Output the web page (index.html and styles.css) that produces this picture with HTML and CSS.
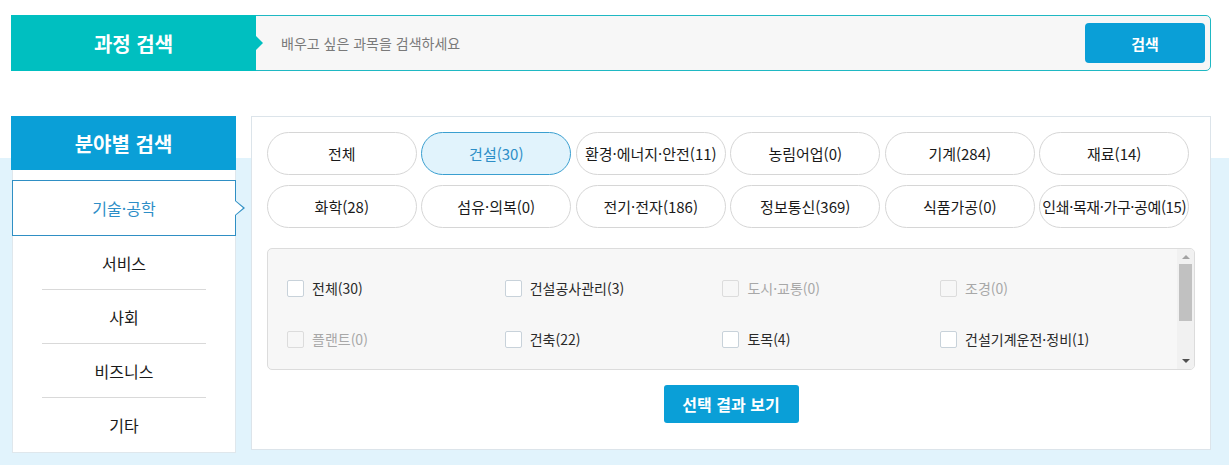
FILE: index.html
```html
<!DOCTYPE html>
<html lang="ko">
<head>
<meta charset="utf-8">
<title>과정 검색</title>
<link rel="stylesheet" href="styles.css">
</head>
<body>
<div class="search">
  <div class="search-label">과정 검색</div>
  <div class="search-input">배우고 싶은 과목을 검색하세요</div>
  <button class="search-btn">검색</button>
</div>

<div class="field-section">
  <aside class="sidebar">
    <div class="sidebar-head">분야별 검색</div>
    <ul class="side-list">
      <li class="side-item active">기술·공학</li>
      <li class="side-item">서비스</li>
      <li class="side-item">사회</li>
      <li class="side-item">비즈니스</li>
      <li class="side-item last">기타</li>
    </ul>
  </aside>

  <section class="panel">
    <div class="pills">
      <div class="pill">전체</div>
      <div class="pill selected">건설(30)</div>
      <div class="pill">환경·에너지·안전(11)</div>
      <div class="pill">농림어업(0)</div>
      <div class="pill">기계(284)</div>
      <div class="pill">재료(14)</div>
      <div class="pill">화학(28)</div>
      <div class="pill">섬유·의복(0)</div>
      <div class="pill">전기·전자(186)</div>
      <div class="pill">정보통신(369)</div>
      <div class="pill">식품가공(0)</div>
      <div class="pill tight">인쇄·목재·가구·공예(15)</div>
    </div>

    <div class="checks-box">
      <div class="checks">
        <label class="check"><span class="box"></span>전체(30)</label>
        <label class="check"><span class="box"></span>건설공사관리(3)</label>
        <label class="check disabled"><span class="box"></span>도시·교통(0)</label>
        <label class="check disabled"><span class="box"></span>조경(0)</label>
        <label class="check disabled"><span class="box"></span>플랜트(0)</label>
        <label class="check"><span class="box"></span>건축(22)</label>
        <label class="check"><span class="box"></span>토목(4)</label>
        <label class="check"><span class="box"></span>건설기계운전·정비(1)</label>
      </div>
      <div class="scrollbar">
        <span class="arrow up"></span>
        <span class="thumb"></span>
        <span class="track-rest"></span>
        <span class="arrow down"></span>
      </div>
    </div>

    <div class="actions">
      <button class="result-btn">선택 결과 보기</button>
    </div>
  </section>
</div>
</body>
</html>
```

FILE: styles.css
```css
* { box-sizing: border-box; }

html, body {
  margin: 0;
  padding: 0;
  background: #fff;
  font-family: "Noto Sans CJK KR", "Noto Sans", sans-serif;
  color: #222;
}

ul { margin: 0; padding: 0; list-style: none; }
button { font-family: inherit; border: 0; cursor: pointer; }

/* ---------- search bar ---------- */
.search {
  display: flex;
  align-items: stretch;
  width: 1200px;
  height: 56px;
  margin: 15px 0 0 11px;
  border: 1px solid #1fb8c3;
  border-radius: 0 5px 5px 0;
  background: #f7f7f7;
}

.search-label {
  position: relative;
  width: 245px;
  background: #00bfc0;
  color: #fff;
  font-size: 20px;
  font-weight: 700;
  display: flex;
  align-items: center;
  justify-content: center;
  margin: -1px 0 -1px -1px;
}

.search-label::after {
  content: "";
  position: absolute;
  right: -7px;
  top: 50%;
  margin-top: -7px;
  border-left: 7px solid #00bfc0;
  border-top: 7px solid transparent;
  border-bottom: 7px solid transparent;
}

.search-input {
  flex: 1;
  display: flex;
  align-items: center;
  padding-left: 25px;
  font-size: 14px;
  color: #7a7a7a;
}

.search-btn {
  align-self: center;
  width: 120px;
  height: 40px;
  margin-right: 5px;
  background: #0a9fd7;
  color: #fff;
  font-size: 15px;
  font-weight: 700;
  border-radius: 4px;
}

/* ---------- field section ---------- */
.field-section {
  display: flex;
  align-items: flex-start;
  gap: 15px;
  margin-top: 45px;
  padding: 0 18px 0 11px;
  height: 349px;
  background: linear-gradient(#fff 0, #fff 42px, #e1f3fc 42px);
}

.sidebar {
  width: 225px;
}

.sidebar-head {
  height: 54px;
  background: #0a9fd7;
  color: #fff;
  font-size: 20px;
  font-weight: 700;
  display: flex;
  align-items: center;
  justify-content: center;
}

.side-list {
  margin-left: 1px;
  background: #fff;
  border: 1px solid #dfe7ec;
  border-top: 0;
  padding-top: 10px;
}

.side-item {
  position: relative;
  height: 54px;
  margin: 0 29px;
  border-bottom: 1px solid #d9d9d9;
  display: flex;
  align-items: center;
  justify-content: center;
  font-size: 16px;
  color: #1a1a1a;
}

.side-item.last { border-bottom: 0; }

.side-item.active {
  margin: 0 -1px 0 -1px;
  height: 56px;
  border: 1px solid #2f8fc4;
  color: #2d8ec7;
}

.side-item.active::before,
.side-item.active::after {
  content: "";
  position: absolute;
  top: 50%;
}

.side-item.active::before {
  right: -10px;
  margin-top: -8px;
  border-left: 10px solid #2f8fc4;
  border-top: 8px solid transparent;
  border-bottom: 8px solid transparent;
}

.side-item.active::after {
  right: -8px;
  margin-top: -7px;
  border-left: 8px solid #fff;
  border-top: 7px solid transparent;
  border-bottom: 7px solid transparent;
}

/* ---------- right panel ---------- */
.panel {
  width: 960px;
  height: 334px;
  background: #fff;
  border: 1px solid #dce4ea;
  padding: 15px 15px 0 15px;
}

.pills {
  display: grid;
  grid-template-columns: repeat(6, 149.6px);
  column-gap: 4.9px;
  row-gap: 10px;
}

.pill {
  height: 43px;
  border: 1px solid #d6d6d6;
  border-radius: 22px;
  background: #fff;
  display: flex;
  align-items: center;
  justify-content: center;
  font-size: 15px;
  color: #1a1a1a;
  white-space: nowrap;
}

.pill.tight { letter-spacing: -0.4px; }

.pill.selected {
  background: #e1f3fc;
  border-color: #3a9fd0;
  color: #2d8ec7;
}

.checks-box {
  display: flex;
  margin-top: 20px;
  width: 928px;
  height: 122px;
  background: #f7f7f7;
  border: 1px solid #dcdcdc;
  border-radius: 5px;
  overflow: hidden;
}

.checks {
  flex: 1;
  display: grid;
  grid-template-columns: repeat(4, 217.7px);
  row-gap: 33px;
  align-content: start;
  padding: 30px 0 0 19px;
}

.check {
  display: flex;
  align-items: center;
  gap: 8px;
  height: 18px;
  font-size: 14px;
  color: #2a2a2a;
}

.check .box {
  width: 17px;
  height: 17px;
  background: #fff;
  border: 1px solid #c8d2da;
  border-radius: 2px;
  flex: none;
}

.check.disabled { color: #a8a8a8; }
.check.disabled .box {
  background: #f7f7f7;
  border-color: #dcdcdc;
}

.scrollbar {
  width: 17px;
  background: #f1f1f1;
  display: flex;
  flex-direction: column;
  align-items: center;
}

.arrow {
  width: 0;
  height: 0;
  border-left: 4px solid transparent;
  border-right: 4px solid transparent;
}

.arrow.up {
  margin: 6px 0 5px;
  border-bottom: 4px solid #a3a3a3;
}

.arrow.down {
  margin: 5px 0 6px;
  border-top: 4px solid #505050;
}

.thumb {
  width: 13px;
  height: 57px;
  background: #c1c1c1;
}

.track-rest { flex: 1; }

.actions {
  display: flex;
  justify-content: center;
  margin-top: 15px;
}

.result-btn {
  width: 135px;
  height: 38px;
  background: #0a9fd7;
  color: #fff;
  font-size: 16px;
  font-weight: 700;
  border-radius: 3px;
}
```
